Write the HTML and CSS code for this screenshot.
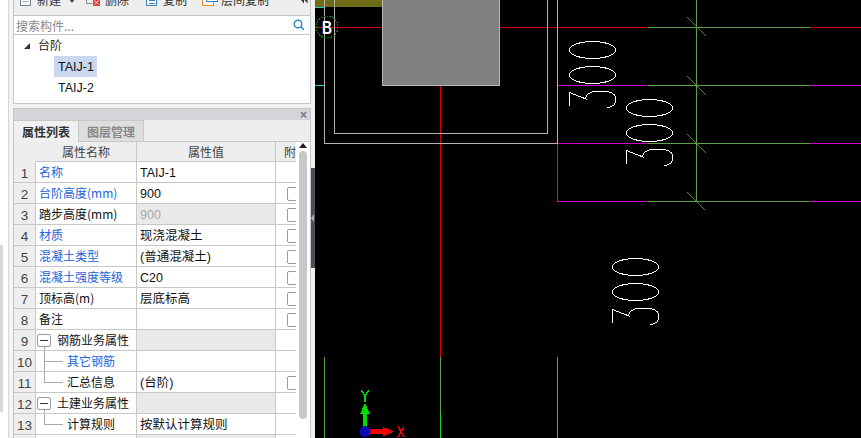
FILE: index.html
```html
<!DOCTYPE html>
<html lang="zh">
<head>
<meta charset="utf-8">
<title>属性列表</title>
<link rel="stylesheet" href="styles.css">
</head>
<body>
<div class="app">
  <aside class="rail"><div class="rail-thumb"></div></aside>
  <section class="side">
    <div class="toolbar">
      <svg class="ico i-new" width="11" height="12" viewBox="0 0 11 12"><rect x="0.500" y="0.500" width="10" height="11" fill="#fff" stroke="#7a8794"/><path d="M2 7.500h7" stroke="#aab2ba"/></svg>
      <span class="lbl l-new">新建</span><span class="caret"></span>
      <svg class="ico i-del" width="14" height="12" viewBox="0 0 14 12"><path d="M0.500 0v9.500h6" fill="none" stroke="#8a8a8a"/><rect x="7" y="5" width="7" height="7" fill="#e0403a"/><path d="M8.500 6.500l4 4m0-4l-4 4" stroke="#fff"/></svg>
      <span class="lbl l-del">删除</span>
      <svg class="ico i-copy" width="12" height="12" viewBox="0 0 12 12" shape-rendering="crispEdges"><rect x="0.500" y="0.500" width="10" height="11" fill="#fff" stroke="#3f7fc4"/><path d="M3 3.500h6M3 6.500h6M3 9.500h6" stroke="#3f7fc4"/></svg>
      <span class="lbl l-copy">复制</span>
      <svg class="ico i-floor" width="16" height="12" viewBox="0 0 16 12" shape-rendering="crispEdges"><path d="M0.500 0v11.500h11V8" fill="#fff" stroke="#ee8a2c"/><rect x="4.500" y="0" width="11" height="7.500" fill="#fff" stroke="#3f7fc4"/></svg>
      <span class="lbl l-floor">层间复制</span>
      <svg class="more" width="7" height="4" viewBox="0 0 7 4"><path d="M0 0h3l0 3.500zM3.500 0h3l0 3.500z" fill="#333"/></svg>
    </div>
    <div class="search"><span class="search-text">搜索构件...</span><svg width="12" height="12" viewBox="0 0 12 12"><circle cx="5" cy="5" r="3.800" fill="none" stroke="#2c8ac0" stroke-width="1.400"/><path d="M7.800 7.800l3 3" stroke="#2c8ac0" stroke-width="1.600"/></svg></div>
    <div class="tree">
      <div class="tree-root"><span class="tri"></span>台阶</div>
      <div class="tree-leaf"><span class="leaf leaf-sel">TAIJ-1</span></div>
      <div class="tree-leaf"><span class="leaf">TAIJ-2</span></div>
    </div>
    <div class="props">
      <div class="props-title"><span class="close">×</span></div>
      <div class="tabs"><span class="tab tab-on">属性列表</span><span class="tab tab-off">图层管理</span></div>
      <div class="grid-wrap">
        <div class="grid">
          <div class="row head"><span class="c0"></span><span class="c1">属性名称</span><span class="c2">属性值</span><span class="c3">附加</span></div>
          <div class="row"><span class="c0">1</span><span class="c1 link">名称</span><span class="c2 val">TAIJ-1</span><span class="c3"></span></div>
          <div class="row"><span class="c0">2</span><span class="c1 link">台阶高度(mm)</span><span class="c2 val">900</span><span class="c3"><i class="chk"></i></span></div>
          <div class="row"><span class="c0">3</span><span class="c1">踏步高度(mm)</span><span class="c2 val grey dim">900</span><span class="c3"><i class="chk"></i></span></div>
          <div class="row"><span class="c0">4</span><span class="c1 link">材质</span><span class="c2 val">现浇混凝土</span><span class="c3"><i class="chk"></i></span></div>
          <div class="row"><span class="c0">5</span><span class="c1 link">混凝土类型</span><span class="c2 val">(普通混凝土)</span><span class="c3"><i class="chk"></i></span></div>
          <div class="row"><span class="c0">6</span><span class="c1 link">混凝土强度等级</span><span class="c2 val">C20</span><span class="c3"><i class="chk"></i></span></div>
          <div class="row"><span class="c0">7</span><span class="c1">顶标高(m)</span><span class="c2 val">层底标高</span><span class="c3"><i class="chk"></i></span></div>
          <div class="row"><span class="c0">8</span><span class="c1">备注</span><span class="c2 val"></span><span class="c3"><i class="chk"></i></span></div>
          <div class="row"><span class="c0">9</span><span class="c1 group"><i class="minus"></i><i class="stem-down"></i>钢筋业务属性</span><span class="c2 grey"></span><span class="c3"></span></div>
          <div class="row"><span class="c0">10</span><span class="c1 child link"><i class="stem-full"></i>其它钢筋</span><span class="c2"></span><span class="c3"></span></div>
          <div class="row"><span class="c0">11</span><span class="c1 child"><i class="stem-end"></i>汇总信息</span><span class="c2 val">(台阶)</span><span class="c3"><i class="chk"></i></span></div>
          <div class="row"><span class="c0">12</span><span class="c1 group"><i class="minus"></i><i class="stem-down"></i>土建业务属性</span><span class="c2 grey"></span><span class="c3"></span></div>
          <div class="row"><span class="c0">13</span><span class="c1 child"><i class="stem-end"></i>计算规则</span><span class="c2 val">按默认计算规则</span><span class="c3"></span></div>
          <div class="row"><span class="c0"></span><span class="c1"></span><span class="c2 grey"></span><span class="c3"></span></div>
        </div>
        <div class="vscroll"><span class="arrow"></span><span class="thumb"></span></div>
      </div>
    </div>
  </section>
  <div class="splitter"><span class="grip"></span></div>
  <main class="canvas">
    <svg class="cad" width="546" height="438" viewBox="315 0 546 438" shape-rendering="crispEdges">
      <rect x="315" y="0" width="67" height="7" fill="#6f6c17"/>
      <g stroke="#d40000" fill="none"><path d="M315 27.500H648M810 27.500H861M440.500 86V357"/></g>
      <g stroke="#d000d0" fill="none"><path d="M558 85.500H648M810 85.500H861M558 143.500H648M810 143.500H861M558 201.500H648M810 201.500H861M557.500 143.500V201.500"/></g>
      <g stroke="#22d0d0" fill="none"><path d="M315 7.500H324M315 85.500H324"/></g>
      <rect x="382.500" y="-2" width="117" height="87.500" fill="#808080" stroke="#b8b8b8"/>
      <g stroke="#b4b4b4" fill="none"><path d="M324.500 0V143.500H557.500V0M334.500 0V133.500H547.500V0"/></g>
      <g stroke="#5fa04a" fill="none"><path d="M648 27.500H810M648 85.500H810M648 143.500H810M648 201.500H810"/><path d="M696.500 0V201.500"/></g>
      <g stroke="#4f8a3c" fill="none"><path d="M687 17L706 36M687 76L706 95M687 134L706 153M687 192L705 210"/></g>
      <g stroke="#5fa04a" fill="none"><path d="M324.500 357V438M440.500 357V414M557.500 357V438"/></g>
      <path d="M440.500 414V438" stroke="#22d022"/>
      <circle cx="327" cy="27" r="11" fill="none" stroke="#0a7a0a" stroke-dasharray="2 1"/>
      <text x="322" y="34" class="bubble" textLength="10" lengthAdjust="spacingAndGlyphs">B</text>
      <g fill="none" stroke="#fff">
        <g>
          <ellipse cx="592.500" cy="50" rx="23" ry="8.500"/>
          <ellipse cx="592.500" cy="75" rx="23" ry="8.500"/>
          <path d="M569.500 105.500V92.500L586 99C585 94 591 91 601 91C610 91 616 94 616 100C616 104 612 107 607 108"/>
        </g>
        <g transform="translate(57 58)">
          <ellipse cx="592.500" cy="50" rx="23" ry="8.500"/>
          <ellipse cx="592.500" cy="75" rx="23" ry="8.500"/>
          <path d="M569.500 105.500V92.500L586 99C585 94 591 91 601 91C610 91 616 94 616 100C616 104 612 107 607 108"/>
        </g>
        <g transform="translate(43 217)">
          <ellipse cx="592.500" cy="50" rx="23" ry="8.500"/>
          <ellipse cx="592.500" cy="75" rx="23" ry="8.500"/>
          <path d="M569.500 105.500V92.500L586 99C585 94 591 91 601 91C610 91 616 94 616 100C616 104 612 107 607 108"/>
        </g>
      </g>
      <rect x="363" y="410" width="4" height="18" fill="#00e000"/>
      <path d="M365 403L370 414H360Z" fill="#00e000"/>
      <rect x="368" y="429" width="18" height="5" fill="#f00000"/>
      <path d="M394 431.500L383 427V436.500Z" fill="#f00000"/>
      <circle cx="365" cy="431.500" r="5.500" fill="#0a0ab4" shape-rendering="auto"/>
      <path d="M361.500 390.500L365 396L368.500 390.500M365 396V402" fill="none" stroke="#00e000" stroke-width="1.300"/>
      <path d="M398 426.500L404 437M404 426.500L398 437" fill="none" stroke="#f00000" stroke-width="1.500"/>
    </svg>
  </main>
</div>
</body>
</html>
```

FILE: styles.css
```css
* { box-sizing: border-box; }
html, body { margin: 0; height: 100%; }
body { overflow: hidden; font-family: "Noto Sans CJK SC", "Liberation Sans", sans-serif; font-size: 12px; color: #111; background: #000; }
.app { display: flex; width: 861px; height: 438px; overflow: hidden; }
.rail { width: 13px; flex: none; background: #f4f4f4; border-left: 8px solid #fff; position: relative; }
.rail::before { content: ""; display: block; width: 1px; height: 100%; background: #d4d4d4; }
.rail-thumb { position: absolute; left: -8px; top: 245px; width: 3px; height: 167px; background: #d8d8d8; }
.side { width: 298px; flex: none; background: #f0f0f0; display: flex; flex-direction: column; }
.toolbar { height: 15px; flex: none; background: #eeeeee; border-left: 1px solid #c4c6cc; border-right: 1px solid #c4c6cc; display: flex; align-items: flex-end; padding-bottom: 9px; padding-left: 6px; overflow: hidden; }
.ico { display: block; flex: none; }
.lbl { font-size: 12px; line-height: 14px; color: #333; white-space: nowrap; flex: none; margin-bottom: -1px; }
.l-new { margin-left: 6px; }
.caret { flex: none; width: 0; height: 0; border: 3px solid transparent; border-top: 4px solid #444; border-bottom: 0; margin: 0 0 3px 8px; }
.i-del { margin-left: 11px; }
.l-del { margin-left: 5px; }
.i-copy { margin-left: 17px; }
.l-copy { margin-left: 5px; }
.i-floor { margin-left: 15px; }
.l-floor { margin-left: 3px; }
.more { flex: none; margin-left: auto; margin-right: 2px; margin-bottom: 2px; }
.search { height: 20px; flex: none; background: #fff; border: 1px solid #c4c6cc; display: flex; align-items: center; justify-content: space-between; padding: 0 5px 0 2px; }
.search-text { font-size: 12px; color: #888; line-height: 17px; }
.tree { height: 69px; flex: none; background: #fff; border: 1px solid #c4c6cc; border-top: 0; }
.tree-root { height: 21px; display: flex; align-items: center; padding-left: 24px; padding-bottom: 2px; color: #222; position: relative; }
.tri { width: 0; height: 0; border-style: solid; border-width: 0 0 6px 6px; border-color: transparent transparent #333 transparent; position: absolute; left: 10px; top: 8px; }
.tree-leaf { height: 21px; padding-left: 40px; display: flex; }
.leaf { font-family: "Liberation Sans", sans-serif; font-size: 12.500px; line-height: 23px; height: 21px; overflow: hidden; padding: 0 3px 0 4px; color: #111; }
.leaf-sel { background: #c9d8ef; }
.props { margin-top: 4px; flex: 1; min-height: 0; border-left: 1px solid #c4c6cc; border-right: 1px solid #c4c6cc; display: flex; flex-direction: column; background: #fff; }
.props-title { height: 12px; flex: none; background: #d3d5da; border-top: 1px solid #c4c6cc; display: flex; justify-content: flex-end; align-items: center; padding-right: 3px; }
.close { font-family: "Liberation Sans", sans-serif; font-size: 12px; line-height: 10px; font-weight: bold; color: #777; }
.tabs { height: 22px; flex: none; display: flex; background: #eeeeee; border-bottom: 1px solid #c8c8c8; }
.tab { width: 65px; text-align: center; line-height: 21px; font-size: 12px; border-right: 1px solid #c8c8c8; border-top: 1px solid #c8c8c8; }
.tab-on { background: #f0f0f0; color: #333; font-weight: 600; margin-bottom: -1px; height: 22px; }
.tab-off { background: #dedede; color: #888; font-weight: 600; }
.grid-wrap { flex: 1; min-height: 0; display: flex; overflow: hidden; }
.grid { width: 282px; flex: none; }
.row { display: grid; grid-template-columns: 22px 101px 139px 20px; height: 21px; }
.row > span { border-right: 1px solid #c8c8c8; border-bottom: 1px solid #c8c8c8; line-height: 19px; white-space: nowrap; overflow: hidden; position: relative; }
.row .c3 { border-right: 0; }
.head { height: 20px; }
.head > span { background: #eeeeee; text-align: center; color: #444; line-height: 19px; height: 20px; }
.head .c0 { background: #fff; border-right: 0; border-bottom: 0; }
.head .c1 { padding-left: 0; }
.head .c3 { text-align: left; padding-left: 8px; }
.row > .c0 { background: #eeeeee; text-align: center; color: #444; font-family: "Liberation Sans", sans-serif; font-size: 13.500px; line-height: 23px; }
.c1 { padding-left: 3px; }
.row > .val { padding-left: 3px; font-family: "Liberation Sans", "Noto Sans CJK SC", sans-serif; font-size: 12.500px; line-height: 23px; }
.link { color: #2563d8; }
.grey { background: #e9e9e9; }
.dim { color: #aaa; }
.chk { position: absolute; left: 11px; top: 4px; width: 16px; height: 14px; border: 1px solid #9a9a9a; border-radius: 2px; background: #fff; display: block; }
.group { padding-left: 21px; }
.child { padding-left: 31px; }
.minus { position: absolute; left: 1px; top: 4px; width: 14px; height: 13px; border: 1px solid #999; border-radius: 2px; background: #fff; }
.minus::after { content: ""; position: absolute; left: 2px; top: 5px; width: 8px; height: 1px; background: #333; }
.stem-down { position: absolute; left: 8px; top: 17px; width: 1px; height: 4px; background: #aaa; }
.stem-full { position: absolute; left: 8px; top: 0; width: 1px; height: 21px; background: #aaa; }
.stem-full::after, .stem-end::after { content: ""; position: absolute; left: 1px; top: 10px; width: 18px; height: 1px; background: #aaa; }
.stem-end { position: absolute; left: 8px; top: 0; width: 1px; height: 11px; background: #aaa; }
.vscroll { width: 14px; flex: none; background: #fff; position: relative; }
.arrow { position: absolute; left: 3px; top: 1px; width: 0; height: 0; border: 4px solid transparent; border-bottom: 5px solid #222; border-top: 0; }
.thumb { position: absolute; left: 3px; top: 9px; width: 8px; height: 268px; background: #c8c8c8; border-radius: 4px; }
.splitter { width: 4px; flex: none; background: #f0f0f0; position: relative; }
.grip { position: absolute; left: 0; top: 168px; width: 4px; height: 100px; background: #4a5058; }
.grip::after { content: ""; position: absolute; left: 0; top: 46px; width: 0; height: 0; border: 4px solid transparent; border-right: 3px solid #aeb2b8; border-left: 0; }
.canvas { flex: 1; min-width: 0; background: #000; }
.cad { display: block; }
.bubble { font-family: "Liberation Sans", sans-serif; font-size: 19px; fill: #fff; font-weight: bold; }
```
